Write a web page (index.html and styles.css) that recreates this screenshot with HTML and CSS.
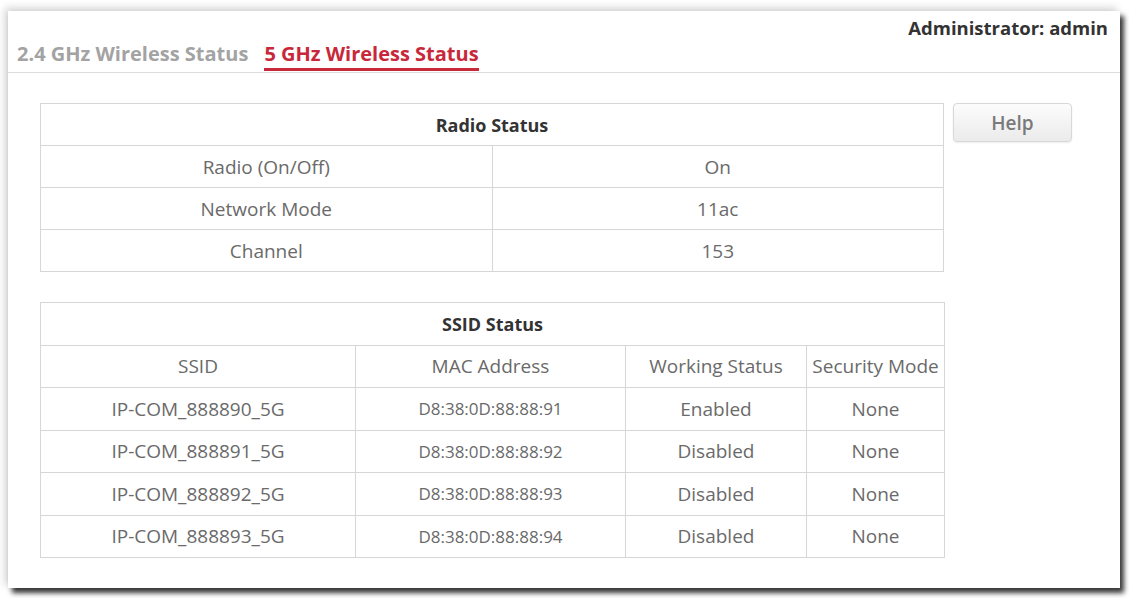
FILE: index.html
```html
<!DOCTYPE html>
<html lang="en">
<head>
<meta charset="utf-8">
<title>5 GHz Wireless Status</title>
<link rel="stylesheet" href="styles.css">
</head>
<body>
<div class="panel">
  <div class="topbar">
    <div class="tabs">
      <span class="tab">2.4 GHz Wireless Status</span>
      <span class="tab active">5 GHz Wireless Status</span>
    </div>
    <div class="admin">Administrator: admin</div>
  </div>
  <div class="content">
    <div class="tables">
      <table class="grid radio">
        <colgroup><col class="c-half"><col class="c-half"></colgroup>
        <tr><th colspan="2">Radio Status</th></tr>
        <tr><td>Radio (On/Off)</td><td>On</td></tr>
        <tr><td>Network Mode</td><td>11ac</td></tr>
        <tr><td>Channel</td><td>153</td></tr>
      </table>
      <table class="grid ssid">
        <colgroup><col class="c-ssid"><col class="c-mac"><col class="c-work"><col class="c-sec"></colgroup>
        <tr><th colspan="4">SSID Status</th></tr>
        <tr><td>SSID</td><td>MAC Address</td><td>Working Status</td><td>Security Mode</td></tr>
        <tr><td>IP-COM_888890_5G</td><td class="mac">D8:38:0D:88:88:91</td><td>Enabled</td><td>None</td></tr>
        <tr><td>IP-COM_888891_5G</td><td class="mac">D8:38:0D:88:88:92</td><td>Disabled</td><td>None</td></tr>
        <tr><td>IP-COM_888892_5G</td><td class="mac">D8:38:0D:88:88:93</td><td>Disabled</td><td>None</td></tr>
        <tr><td>IP-COM_888893_5G</td><td class="mac">D8:38:0D:88:88:94</td><td>Disabled</td><td>None</td></tr>
      </table>
    </div>
    <button class="help" type="button">Help</button>
  </div>
</div>
</body>
</html>
```

FILE: styles.css
```css
html, body {
  margin: 0;
  padding: 0;
  background: #ffffff;
}
body {
  font-family: "Open Sans", "Noto Sans", sans-serif;
  width: 1129px;
  height: 598px;
  overflow: hidden;
  padding-top: 11px;
  padding-left: 8px;
  box-sizing: border-box;
}
.panel {
  width: 1112px;
  height: 577px;
  background: #ffffff;
  box-shadow: 4px 5px 5px rgba(0, 0, 0, 0.78), -3px -3px 8px rgba(0, 0, 0, 0.18);
}
.topbar {
  height: 61px;
  border-bottom: 1px solid #dcdcdc;
  display: flex;
  justify-content: space-between;
}
.tabs {
  display: flex;
  align-self: flex-end;
  gap: 16px;
  padding-left: 9px;
}
.tab {
  font-size: 20px;
  font-weight: 700;
  line-height: 27px;
  color: #a3a3a3;
  padding-bottom: 1px;
  border-bottom: 3px solid transparent;
  margin-bottom: 1px;
}
.tab.active {
  color: #c8283a;
  border-bottom-color: #c8283a;
}
.admin {
  align-self: flex-start;
  font-size: 18.5px;
  font-weight: 700;
  line-height: 24px;
  color: #333333;
  padding-top: 5px;
  padding-right: 12px;
}
.content {
  display: flex;
  align-items: flex-start;
  padding-top: 30px;
  padding-left: 32px;
}
.tables {
  display: flex;
  flex-direction: column;
  gap: 30px;
  width: 904px;
}
.grid {
  width: 904px;
  border-collapse: collapse;
  table-layout: fixed;
  border: 1px solid #cfcfcf;
}
.grid th,
.grid td {
  border: 1px solid #d6d6d6;
  text-align: center;
  padding: 0;
  font-size: 19px;
  color: #6a6a6a;
  font-weight: 400;
  white-space: nowrap;
}
.grid th {
  font-weight: 700;
  color: #333333;
  font-size: 18px;
}
.radio tr { height: 42px; }
.ssid tr { height: 42.5px; }
.c-half { width: 50%; }
.c-ssid { width: 315px; }
.c-mac { width: 270px; }
.c-work { width: 181px; }
.c-sec { width: 138px; }
.grid td.mac {
  font-size: 17px;
}
.help {
  margin-left: 9px;
  width: 119px;
  height: 39px;
  border: 1px solid #d8d8d8;
  border-radius: 4px;
  background: linear-gradient(#fcfcfc, #ebebeb);
  box-shadow: 0 1px 2px rgba(0, 0, 0, 0.08);
  font-family: "Open Sans", "Noto Sans", sans-serif;
  font-size: 19px;
  font-weight: 600;
  color: #7a7a7a;
  padding: 0;
}
```
